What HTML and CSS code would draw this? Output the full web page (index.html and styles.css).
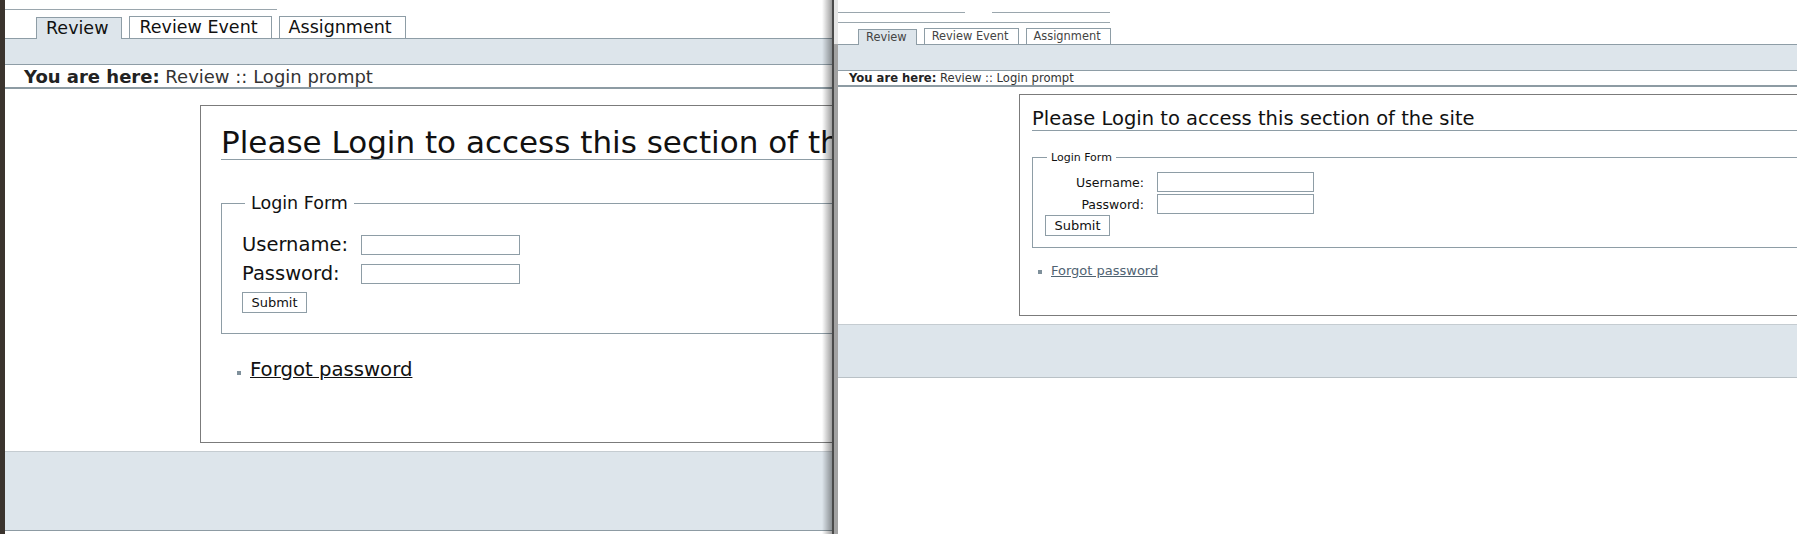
FILE: index.html
```html
<!DOCTYPE html>
<html lang="en">
  <head>
    <meta charset="UTF-8" />
    <title>Review :: Login prompt</title>
    <link rel="stylesheet" href="styles.css">
  </head>
  <body>
    <div class="screen">
      <!-- left window: text zoomed in -->
      <div class="win big">
        <div class="top-lines">
          <div class="line line-full"></div>
        </div>
        <ul class="tabs">
          <li class="tab current">Review</li>
          <li class="tab">Review Event</li>
          <li class="tab">Assignment</li>
        </ul>
        <div class="band"></div>
        <div class="crumb"><b>You are here:</b> Review :: Login prompt</div>
        <div class="page">
          <div class="box">
            <h1>Please Login to access this section of the site</h1>
            <form>
              <fieldset>
                <legend>Login Form</legend>
                <div class="row"><label>Username:</label><input type="text"></div>
                <div class="row"><label>Password:</label><input type="password"></div>
                <button type="button">Submit</button>
              </fieldset>
            </form>
            <ul class="links">
              <li><a href="#">Forgot password</a></li>
            </ul>
          </div>
        </div>
        <div class="footer"></div>
      </div>

      <div class="split"></div>

      <!-- right window: normal text size -->
      <div class="win small">
        <div class="top-lines">
          <div class="line-pair">
            <div class="line seg-a"></div>
            <div class="line seg-b"></div>
          </div>
          <div class="line line-full"></div>
        </div>
        <ul class="tabs">
          <li class="tab current">Review</li>
          <li class="tab">Review Event</li>
          <li class="tab">Assignment</li>
        </ul>
        <div class="band"></div>
        <div class="crumb"><b>You are here:</b> Review :: Login prompt</div>
        <div class="page">
          <div class="box">
            <h1>Please Login to access this section of the site</h1>
            <form>
              <fieldset>
                <legend>Login Form</legend>
                <div class="row"><label>Username:</label><input type="text"></div>
                <div class="row"><label>Password:</label><input type="password"></div>
                <button type="button">Submit</button>
              </fieldset>
            </form>
            <ul class="links">
              <li><a href="#">Forgot password</a></li>
            </ul>
          </div>
        </div>
        <div class="footer"></div>
      </div>
    </div>
  </body>
</html>
```

FILE: styles.css
```css
body {
  margin: 0;
  background: white;
  overflow: hidden;
  font-family: "DejaVu Sans", Verdana, sans-serif;
  color: #111;
}

.screen {
  display: flex;
  height: 534px;
  width: 1797px;
  overflow: hidden;
}

.win {
  position: relative;
  overflow: hidden;
  background: white;
}

.win.big {
  width: 827px;
  flex: none;
  border-left: 5px solid #3b342e;
}

/* shadow of the left window over the right one */
.win.big::after {
  content: "";
  position: absolute;
  top: 0;
  right: 0;
  bottom: 0;
  width: 10px;
  background: linear-gradient(to right, rgba(0, 0, 0, 0), rgba(0, 0, 0, 0.38));
}

.split {
  width: 4px;
  flex: none;
  border-left: 2px solid #4a4a4a;
  background: linear-gradient(to bottom, #e6e6e6 0, #e6e6e6 44px, #a2a2a2 44px);
}

.win.small {
  flex: 1;
}

/* thin rules above the tabs */
.line {
  border-top: 1px solid #9aa6ad;
  height: 0;
}

.big .top-lines {
  padding-top: 9px;
}

.big .line-full {
  width: 272px;
}

.small .top-lines {
  padding-top: 12px;
}

.small .line-pair {
  display: flex;
  gap: 27px;
}

.small .seg-a {
  width: 127px;
}

.small .seg-b {
  width: 118px;
}

.small .line-full {
  width: 272px;
  margin-top: 9px;
}

/* tabs */
.tabs {
  display: flex;
  align-items: flex-end;
  gap: 7px;
  list-style: none;
  margin: 0;
  padding: 0;
  position: relative;
  z-index: 1;
}

.tab {
  border: 1px solid #8e9da6;
  border-bottom: none;
  background: white;
  white-space: nowrap;
}

.tab.current {
  background: #dde5eb;
  margin-bottom: -1px;
  padding-bottom: 1px;
}

.big .tabs {
  margin: 6px 0 0 31px;
}

.big .tab {
  font-size: 17.5px;
  line-height: 21px;
  padding: 0 13px 0 9px;
}

.small .tabs {
  margin: 5px 0 0 20px;
}

.small .tab {
  font-size: 11.4px;
  line-height: 15px;
  padding: 0 9px 0 7px;
  color: #444;
}

.band {
  height: 25px;
  background: #dde5eb;
  border-top: 1px solid #8e9da6;
  border-bottom: 1px solid #8e9da6;
}

/* breadcrumb */
.crumb {
  border-bottom: 2px solid #8d9ba3;
  color: #333;
  white-space: nowrap;
}

.crumb b {
  color: #222;
}

.big .crumb {
  font-size: 18px;
  line-height: 20px;
  padding: 2px 0 0 19px;
}

.small .crumb {
  font-size: 11.6px;
  line-height: 13px;
  padding: 1px 0 0 11px;
}

/* login box */
.box {
  width: 1200px;
  border: 1px solid #7b7b7b;
  border-right: none;
}

.box h1 {
  margin: 0;
  font-weight: normal;
  white-space: nowrap;
  border-bottom: 1px solid #8e9da6;
}

fieldset {
  margin: 0;
  border: 1px solid #8e9da6;
  border-right: none;
  min-width: 0;
}

legend {
  color: #111;
}

.row {
  display: flex;
  align-items: center;
}

input {
  box-sizing: border-box;
  height: 20px;
  border: 1px solid #8e9da6;
  background: white;
  margin: 0;
  padding: 0 2px;
}

button {
  display: block;
  box-sizing: border-box;
  width: 65px;
  height: 21px;
  margin: 0;
  padding: 0;
  border: 1px solid #8e9da6;
  background: white;
  font-family: "DejaVu Sans", Verdana, sans-serif;
  font-size: 13px;
  color: #111;
}

.links {
  list-style: none;
  margin: 0;
}

.links li::before {
  content: "";
  display: inline-block;
  width: 4px;
  height: 4px;
  background: #7f909b;
}

.footer {
  margin-top: 8px;
  background: #dde5eb;
  border-top: 1px solid #c5ccd1;
}

/* sizes for the zoomed window */
.big .page {
  margin: 16px 0 0 195px;
}

.big .box {
  padding: 0 0 60px 20px;
}

.big .box h1 {
  font-size: 31px;
  line-height: 33px;
  margin-top: 20px;
}

.big fieldset {
  margin-top: 33px;
  padding: 17px 0 20px 20px;
}

.big legend {
  font-size: 17.5px;
  padding: 0 6px;
  margin-left: 3px;
}

.big .row {
  height: 29px;
}

.big label {
  width: 119px;
  font-size: 19.5px;
}

.big input {
  width: 159px;
}

.big button {
  margin-top: 4px;
}

.big .links {
  margin-top: 24px;
  padding-left: 16px;
  font-size: 19.7px;
  line-height: 24px;
}

.big .links li::before {
  margin-right: 9px;
  vertical-align: 1px;
}

.big .links a {
  color: #111;
}

.big .footer {
  height: 78px;
  border-bottom: 1px solid #8d9ba3;
}

/* sizes for the normal window */
.small .page {
  margin: 7px 0 0 181px;
}

.small .box {
  padding: 0 0 36px 12px;
}

.small .box h1 {
  font-size: 19.5px;
  line-height: 23px;
  margin-top: 12px;
}

.small fieldset {
  margin-top: 20px;
  padding: 7px 0 11px 12px;
}

.small legend {
  font-size: 11px;
  padding: 0 4px;
  margin-left: 2px;
}

.small .row {
  height: 22px;
}

.small label {
  width: 99px;
  padding-right: 13px;
  text-align: right;
  font-size: 12.5px;
}

.small input {
  width: 157px;
}

.small .links {
  margin-top: 15px;
  padding-left: 6px;
  font-size: 13px;
  line-height: 16px;
}

.small .links li::before {
  margin-right: 9px;
  vertical-align: 1px;
}

.small .links a {
  color: #4f6372;
}

.small .footer {
  height: 52px;
  border-bottom: 1px solid #b9c1c6;
}
```
